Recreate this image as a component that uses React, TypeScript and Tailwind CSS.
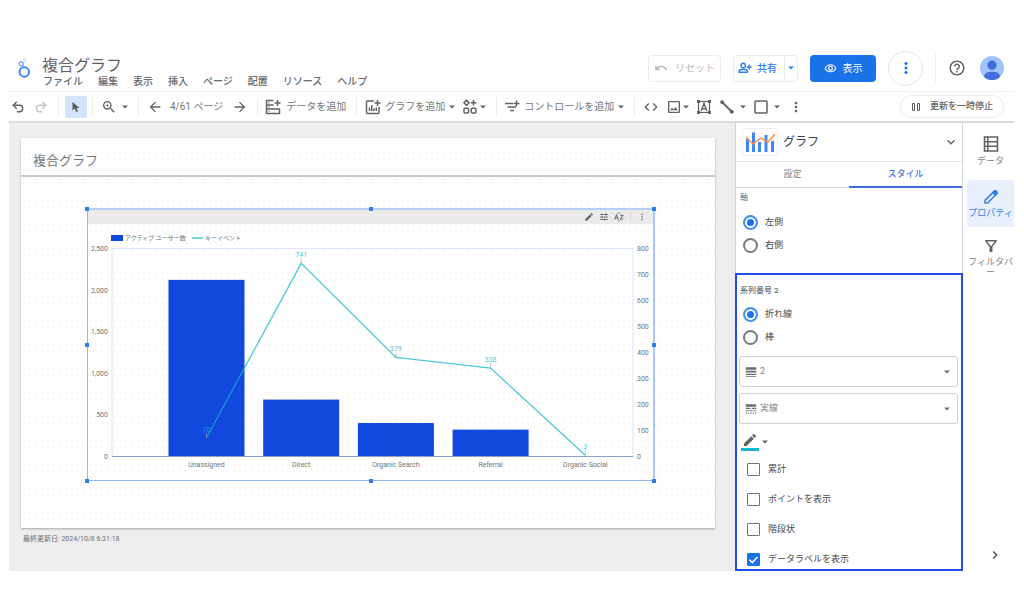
import type { ReactNode } from "react";
import { Redo2, Undo2 } from "lucide-react";
import {
	MdArrowBack,
	MdArrowForward,
	MdChevronRight,
	MdCode,
	MdEdit,
	MdExpandMore,
	MdHelpOutline,
	MdLineStyle,
	MdLineWeight,
	MdMoreVert,
	MdOutlineFilterAlt,
	MdOutlineImage,
	MdOutlineVisibility,
	MdTune,
	MdUndo,
	MdZoomIn,
} from "react-icons/md";

const menus = ["ファイル", "編集", "表示", "挿入", "ページ", "配置", "リソース", "ヘルプ"];

const series = [
	{ label: "Unassigned", users: 2117, events: 70 },
	{ label: "Direct", users: 678, events: 741 },
	{ label: "Organic Search", users: 396, events: 379 },
	{ label: "Referral", users: 317, events: 338 },
	{ label: "Organic Social", users: 0, events: 3 },
];

const Caret = () => (
	<svg viewBox="0 0 6 4" className="w-[6px] h-[4px] shrink-0" fill="currentColor">
		<path d="M0 .5h6L3 3.5z" />
	</svg>
);

const Separator = ({ className = "" }: { className?: string }) => (
	<div className={`w-px h-[18px] bg-[#ececee] shrink-0 ${className}`} />
);

const Logo = () => (
	<svg viewBox="0 0 14 20" className="w-[14px] h-[20px] shrink-0" fill="none">
		<circle cx="7.3" cy="14" r="4.7" stroke="#4285f4" strokeWidth="2" />
		<circle cx="4.2" cy="6" r="2" stroke="#6ea6f7" strokeWidth="1.3" />
		<circle cx="7.5" cy="2.4" r="1.3" stroke="#b9d3fb" strokeWidth="1" />
	</svg>
);

const AddDataIcon = () => (
	<svg viewBox="0 0 16 16" className="size-4 shrink-0" fill="none" stroke="currentColor" strokeWidth="1.5">
		<path d="M8.5 1.5h-7v13h13v-5M1.5 6h7M1.5 10h13M12.5 1v6M9.5 4h6" />
		<path d="M3.5 3.8h1M3.5 8h1M3.5 12.3h1" />
	</svg>
);

const AddChartIcon = () => (
	<svg viewBox="0 0 16 16" className="size-4 shrink-0" fill="none" stroke="currentColor" strokeWidth="1.5">
		<path d="M9 2H2.5a1 1 0 0 0-1 1v10.5a1 1 0 0 0 1 1H13a1 1 0 0 0 1-1V8M12.5 1v6M9.5 4h6" />
		<path d="M4.5 12V8.5M6.8 12V6M9 12V9.5M11.3 12V8.5" />
	</svg>
);

const WidgetsIcon = () => (
	<svg viewBox="0 0 16 16" className="size-4 shrink-0" fill="none" stroke="currentColor" strokeWidth="1.5">
		<path d="M4.5 1.2 7 3.8 4.5 6.4 2 3.8zM11.5 1v5.6M8.7 3.8h5.6" />
		<rect x="2" y="9.3" width="4.6" height="4.6" rx="1" />
		<rect x="9.3" y="9.3" width="4.6" height="4.6" rx="1" />
	</svg>
);

const AddControlIcon = () => (
	<svg viewBox="0 0 16 16" className="size-4 shrink-0" fill="none" stroke="currentColor" strokeWidth="1.5">
		<path d="M1 4.5h8M3.5 8H12M6 11.5h4M12.5 1.5v6M9.5 4.5h6" />
	</svg>
);

const TextBoxIcon = () => (
	<svg viewBox="0 0 16 16" className="size-4 shrink-0" fill="none" stroke="currentColor" strokeWidth="1.2">
		<rect x="2.5" y="2.5" width="11" height="11" />
		<path d="M5 12 8 4.5l3 7.5M6 9.8h4" strokeWidth="1.4" />
		<path d="M1 1h3v3H1zM12 1h3v3h-3zM1 12h3v3H1zM12 12h3v3h-3z" fill="currentColor" stroke="none" />
	</svg>
);

const LineIcon = () => (
	<svg viewBox="0 0 16 16" className="size-4 shrink-0" stroke="currentColor" fill="currentColor">
		<path d="m3 3 10 10" strokeWidth="1.8" />
		<circle cx="3.2" cy="3.2" r="1.5" />
		<circle cx="12.8" cy="12.8" r="1.5" />
	</svg>
);

const RectIcon = () => (
	<svg viewBox="0 0 16 16" className="size-4 shrink-0" fill="none" stroke="currentColor" strokeWidth="1.5">
		<rect x="2" y="2" width="12" height="12" rx=".8" />
	</svg>
);

const ShareIcon = () => (
	<svg viewBox="0 0 14 14" className="size-[14px] shrink-0" fill="none" stroke="currentColor" strokeWidth="1.4">
		<circle cx="5.2" cy="4.5" r="2.2" />
		<path d="M1 11.3v-.8c0-1.4 2.2-2.2 4.2-2.2s4.2.8 4.2 2.2v.8zM11.2 3.5v5M8.7 6h5" />
	</svg>
);

const Avatar = () => (
	<svg viewBox="0 0 24 24" className="size-6 shrink-0">
		<clipPath id="avatar">
			<circle cx="12" cy="12" r="12" />
		</clipPath>
		<g clipPath="url(#avatar)">
			<rect width="24" height="24" fill="#a1c2fa" />
			<circle cx="12" cy="9.2" r="4.6" fill="#3f6fdd" />
			<path d="M4 21c0-4 4-5.3 8-5.3s8 1.3 8 5.3v3H4z" fill="#3f6fdd" />
		</g>
	</svg>
);

const ComboIcon = () => (
	<svg viewBox="0 0 32 24" className="w-[32px] h-[24px]" fill="none">
		<path d="M3.5 9v13M9.5 2.5V22M15.5 12v10M22 5v17M28.5 11v11" stroke="#4285f4" strokeWidth="3" />
		<path d="m2 7 7 7 8-6 7 4 7-8" stroke="#fa903e" strokeWidth="1.4" />
	</svg>
);

const DataIcon = () => (
	<svg viewBox="0 0 16 16" className="size-4 text-[#5f6368]" fill="none" stroke="currentColor" strokeWidth="1.6">
		<path d="M1.5 1h13v14h-13zM1.5 5.7h13M1.5 10.3h13M4.8 1v14" />
	</svg>
);

const PropertyIcon = () => (
	<svg viewBox="0 0 16 16" className="size-4" fill="none" stroke="currentColor" strokeWidth="1.5" strokeLinejoin="round">
		<path d="M2 14v-2.6l8.5-8.5 2.6 2.6L4.6 14z" />
		<path d="M9.8 3.6 11.4 2a1.3 1.3 0 0 1 1.8 0l.8.8a1.3 1.3 0 0 1 0 1.8l-1.6 1.6z" fill="currentColor" />
	</svg>
);

const SortIcon = () => (
	<svg viewBox="0 0 12 12" className="size-[10px]" fill="none" stroke="currentColor" strokeWidth="1.2">
		<path d="m1 9 2-6 2 6M1.5 7h3M7.5 4H11L7.5 8.5H11M4.8 2 6 .8 7.2 2M4.8 10 6 11.2 7.2 10" />
	</svg>
);

const Header = () => (
	<header className="flex items-center h-[47px] border-b border-[#f1f1f1] text-[#5f6368]">
		<div className="ml-2 flex">
			<Logo />
		</div>
		<div className="self-end ml-[11px] pb-[3px]">
			<h1 className="text-[16px] leading-[20px] text-[#5f6267]">複合グラフ</h1>
			<nav className="flex gap-[15px] pl-px text-[10px] leading-[12px] font-medium text-[#66696e]">
				{menus.map((menu) => (
					<button key={menu} type="button">
						{menu}
					</button>
				))}
			</nav>
		</div>
		<div className="ml-auto mr-[10px] flex items-center gap-3 text-[10px]">
			<button
				type="button"
				disabled
				className="flex items-center justify-center gap-[7px] w-[73px] h-[27px] rounded-sm border border-[#ececec] text-[#b9bbbe]"
			>
				<MdUndo className="size-[14px]" />
				リセット
			</button>
			<div className="flex h-[27px] rounded-sm border border-[#e9ebee] text-[#2f80ea] font-medium">
				<button type="button" className="flex items-center gap-[5px] pl-1 pr-[7px] border-r border-[#e9ebee]">
					<ShareIcon />
					共有
				</button>
				<button type="button" aria-label="共有オプション" className="px-[3px]">
					<Caret />
				</button>
			</div>
			<button
				type="button"
				className="flex items-center justify-center gap-[6px] w-[66px] h-[27px] rounded-sm bg-[#1a73e8] text-white"
			>
				<MdOutlineVisibility className="size-[13px]" />
				表示
			</button>
			<button
				type="button"
				aria-label="その他"
				className="flex items-center justify-center size-[35px] rounded-full border border-[#e4e6e8] text-[#1a73e8]"
			>
				<MdMoreVert className="size-[18px]" />
			</button>
			<div className="w-px h-8 bg-[#f0f0f0]" />
			<button type="button" aria-label="ヘルプ" className="mr-[2px]">
				<MdHelpOutline className="size-[18px]" />
			</button>
			<button type="button" aria-label="アカウント">
				<Avatar />
			</button>
		</div>
	</header>
);

const Toolbar = () => (
	<div className="flex items-center h-[31px] border-b-2 border-[#dadbdb] text-[10px] whitespace-nowrap text-[#5f6368]">
		<button type="button" aria-label="元に戻す" className="ml-[2px]">
			<Undo2 className="size-[14px]" strokeWidth={2.5} />
		</button>
		<button type="button" aria-label="やり直す" className="ml-[9px] text-[#c4c6c9]">
			<Redo2 className="size-[14px]" strokeWidth={2.5} />
		</button>
		<Separator className="ml-[10px]" />
		<button
			type="button"
			aria-label="選択"
			className="flex items-center justify-center ml-[6px] w-[22px] h-[22px] bg-[#d2e3fc]"
		>
			<svg viewBox="0 0 10 12" className="w-[10px] h-[12px]" fill="#55585c">
				<path d="M1.5 1v8.5l2.2-1.9 1.5 3.4 1.7-.8-1.5-3.3h3z" />
			</svg>
		</button>
		<Separator className="ml-[5px]" />
		<button type="button" aria-label="ズーム" className="flex items-center gap-[5px] ml-[8px]">
			<MdZoomIn className="size-4" />
			<Caret />
		</button>
		<Separator className="ml-[10px]" />
		<button type="button" aria-label="前のページ" className="ml-[8px]">
			<MdArrowBack className="size-4" />
		</button>
		<span className="ml-[7px] text-[#74777b]">4/61 ページ</span>
		<button type="button" aria-label="次のページ" className="ml-[9px]">
			<MdArrowForward className="size-4" />
		</button>
		<Separator className="ml-[9px]" />
		<button type="button" className="flex items-center gap-[5px] ml-[7px]">
			<AddDataIcon />
			<span className="text-[#74777b]">データを追加</span>
		</button>
		<Separator className="ml-[10px]" />
		<button type="button" className="flex items-center gap-1 ml-[8px]">
			<AddChartIcon />
			<span className="text-[#74777b]">グラフを追加</span>
			<Caret />
		</button>
		<button type="button" aria-label="コミュニティ" className="flex items-center gap-[2px] ml-[7px]">
			<WidgetsIcon />
			<Caret />
		</button>
		<Separator className="ml-[10px]" />
		<button type="button" className="flex items-center gap-1 ml-[7px]">
			<AddControlIcon />
			<span className="text-[#74777b]">コントロールを追加</span>
			<Caret />
		</button>
		<Separator className="ml-[10px]" />
		<button type="button" aria-label="URL 埋め込み" className="ml-[8px]">
			<MdCode className="size-4" />
		</button>
		<button type="button" aria-label="画像" className="flex items-center gap-[1px] ml-[7px]">
			<MdOutlineImage className="size-4" />
			<Caret />
		</button>
		<button type="button" aria-label="テキスト" className="ml-[7px]">
			<TextBoxIcon />
		</button>
		<button type="button" aria-label="線" className="flex items-center gap-[5px] ml-[7px]">
			<LineIcon />
			<Caret />
		</button>
		<button type="button" aria-label="図形" className="flex items-center gap-[5px] ml-[7px]">
			<RectIcon />
			<Caret />
		</button>
		<button type="button" aria-label="その他のツール" className="ml-[8px]">
			<MdMoreVert className="size-4" />
		</button>
		<button
			type="button"
			className="flex items-center gap-[9px] ml-auto mr-[10px] h-[23px] px-[10px] rounded-full border border-[#ececee] text-[9px] font-medium"
		>
			<svg viewBox="0 0 10 10" className="size-[10px]" fill="none" stroke="currentColor">
				<path d="M1.5 1.5h2v7h-2zM6.5 1.5h2v7h-2z" />
			</svg>
			更新を一時停止
		</button>
	</div>
);

const ComboChart = () => {
	const left = 24;
	const right = 545;
	const top = 24;
	const bottom = 232;
	const height = bottom - top;
	const centerX = (i: number) => 118.5 + i * 94.7;
	const usersY = (v: number) => bottom - (v / 2500) * height;
	const eventsY = (v: number) => bottom - (v / 800) * height;

	return (
		<svg viewBox="0 0 565 256" className="block w-full" fontSize="7" fill="#70757a">
			<rect x="23" y="11" width="12" height="6" fill="#1149de" />
			<text x="37" y="16" fontSize="6">
				アクティブ ユーザー数
			</text>
			<path d="M104 14h11" stroke="#4dc9d8" strokeWidth="1.5" />
			<text x="117" y="16" fontSize="6">
				キーイベント
			</text>

			<path
				d={`M${left} ${bottom}V${top}.5H${right}V${bottom}`}
				fill="none"
				stroke="#d9e5fb"
			/>
			{[0, 500, 1000, 1500, 2000, 2500].map((tick) => (
				<text key={tick} x={left - 4} y={usersY(tick) + 3} textAnchor="end">
					{tick.toLocaleString("en-US")}
				</text>
			))}
			{[0, 100, 200, 300, 400, 500, 600, 700, 800].map((tick) => (
				<text key={tick} x={right + 4} y={eventsY(tick) + 3}>
					{tick}
				</text>
			))}

			{series.map(({ label, users }, i) => (
				<g key={label}>
					<rect
						x={centerX(i) - 38}
						y={usersY(users)}
						width="76"
						height={bottom - usersY(users)}
						fill="#1149de"
					/>
					<text x={centerX(i)} y={bottom + 11} textAnchor="middle">
						{label}
					</text>
				</g>
			))}
			<path d={`M${left} ${bottom}.5H${right}`} stroke="#8c9fd0" />

			<polyline
				points={series.map(({ events }, i) => `${centerX(i)},${eventsY(events)}`).join(" ")}
				fill="none"
				stroke="#12b5cb"
				strokeOpacity=".75"
				strokeWidth="1.3"
			/>
			{series.map(({ label, events }, i) => (
				<g key={label}>
					<path d={`M${centerX(i)} ${eventsY(events)}v-5`} stroke="#999" strokeWidth=".6" />
					<text
						x={centerX(i)}
						y={eventsY(events) - 6}
						textAnchor="middle"
						fill="#12b5cb"
						fillOpacity=".8"
					>
						{events}
					</text>
				</g>
			))}
		</svg>
	);
};

const handles = [
	"-left-[2px] -top-[1px]",
	"left-1/2 -translate-x-1/2 -top-[1px]",
	"-right-[1px] -top-[1px]",
	"-left-[2px] top-1/2 -translate-y-1/2",
	"-right-[1px] top-1/2 -translate-y-1/2",
	"-left-[2px] -bottom-[2px]",
	"left-1/2 -translate-x-1/2 -bottom-[2px]",
	"-right-[1px] -bottom-[2px]",
];

const Canvas = () => (
	<main className="flex-1 min-w-0 bg-[#ededed] pl-3 pr-5 pt-[15px]">
		<section className="pb-[47px] bg-white bg-[radial-gradient(circle,#f8f8f9_1px,transparent_1px)] bg-[size:6px_6px] shadow-[0_1px_2px_rgba(0,0,0,0.3)]">
			<h2 className="h-[39px] pl-[12px] pt-[14px] border-b-2 border-[#c9c9c9] text-[13px] leading-[18px] text-[#757780]">
				複合グラフ
			</h2>
			<div className="relative mt-[31px] ml-[66px] mr-[60px]">
				<div className="border border-t-2 border-r-2 border-[#8fb6f6] border-t-[#b7cdf4] border-r-[#a9c6f7]">
					<div className="flex items-center justify-end gap-[5px] h-[14px] pr-[6px] bg-black/8 text-[#5f6368]">
						<button type="button" aria-label="編集">
							<MdEdit className="size-[10px]" />
						</button>
						<button type="button" aria-label="調整">
							<MdTune className="size-[10px]" />
						</button>
						<button type="button" aria-label="並べ替え">
							<SortIcon />
						</button>
						<div className="w-px h-[10px] mx-[1px] bg-[#d8d8d8]" />
						<button type="button" aria-label="グラフのメニュー">
							<MdMoreVert className="size-[10px]" />
						</button>
					</div>
					<ComboChart />
				</div>
				{handles.map((place) => (
					<span key={place} className={`absolute size-[4px] bg-[#2f7de9] ${place}`} />
				))}
			</div>
		</section>
		<p className="mt-[5px] pl-[2px] text-[7px] leading-[12px] text-[#6d7074]">
			最終更新日: 2024/10/8 6:31:18
		</p>
	</main>
);

type RadioProps = { name: string; label: string; checked?: boolean };

const Radio = ({ name, label, checked }: RadioProps) => (
	<label className="flex items-center gap-[7px] h-[23px] text-[9px] text-[#45484c]">
		<input
			type="radio"
			name={name}
			defaultChecked={checked}
			className="appearance-none size-[15px] rounded-full border-2 border-[#777b80] checked:border-[#4a90f0] checked:bg-[#1a73e8] checked:shadow-[inset_0_0_0_2px_white]"
		/>
		{label}
	</label>
);

const Checkbox = ({ label, checked }: { label: string; checked?: boolean }) => (
	<label className="flex items-center gap-[8px] h-[15px] text-[9px] text-[#45484c]">
		<span className="grid place-items-center">
			<input
				type="checkbox"
				defaultChecked={checked}
				className="peer appearance-none col-start-1 row-start-1 size-[13px] rounded-[1px] border border-[#6f7276] checked:border-[#1a73e8] checked:bg-[#1a73e8]"
			/>
			<svg
				viewBox="0 0 13 13"
				className="hidden peer-checked:block col-start-1 row-start-1 size-[13px] pointer-events-none"
				fill="none"
				stroke="white"
				strokeWidth="1.6"
			>
				<path d="m2.5 6.8 2.8 2.8L10.5 4" />
			</svg>
		</span>
		{label}
	</label>
);

type SelectBoxProps = { icon: ReactNode; label: string; options: string[] };

const SelectBox = ({ icon, label, options }: SelectBoxProps) => (
	<div className="grid items-center h-[31px] rounded-[3px] border border-[#cfd1d4] text-[#6b6e73]">
		<span className="col-start-1 row-start-1 pl-[4px] pointer-events-none">{icon}</span>
		<select
			aria-label={label}
			className="appearance-none col-start-1 row-start-1 w-full h-full pl-[20px] text-[9px] text-[#808388] bg-transparent"
		>
			{options.map((option) => (
				<option key={option}>{option}</option>
			))}
		</select>
		<span className="col-start-1 row-start-1 justify-self-end pr-[7px] pointer-events-none">
			<Caret />
		</span>
	</div>
);

const StylePanel = () => (
	<aside className="w-[228px] shrink-0 bg-white border-x border-[#d5d7d9]">
		<div className="flex items-center h-[39px] pl-[6px] pr-[3px] border-b border-[#e3e4e6]">
			<div className="flex items-center justify-center w-[36px] h-[28px] rounded-sm border border-[#efefef]">
				<ComboIcon />
			</div>
			<h2 className="ml-[5px] text-[12px] text-[#3c4043]">グラフ</h2>
			<button type="button" aria-label="閉じる" className="ml-auto text-[#5f6368]">
				<MdExpandMore className="size-4" />
			</button>
		</div>
		<div className="grid grid-cols-2 h-[26px] text-[9px]">
			<button type="button" className="border-b border-[#d5d7d9] text-[#80868b]">
				設定
			</button>
			<button type="button" className="border-b-2 border-[#3f6fdd] pt-px text-[#4a78dc] font-medium">
				スタイル
			</button>
		</div>
		<fieldset className="pt-1 pb-[16px]">
			<legend className="float-left w-full px-1 text-[8px] leading-[12px] text-[#6b6e73]">軸</legend>
			<div className="pl-[7px] pt-[19px]">
				<Radio name="axis" label="左側" checked />
				<Radio name="axis" label="右側" />
			</div>
		</fieldset>
		<div className="-mx-px border-2 border-[#2349f5] pt-[10px] pb-[2px]">
			<h3 className="pl-[3px] text-[8px] leading-[12px] font-medium text-[#66696e]">系列番号 2</h3>
			<div className="mt-[6px] pl-[6px]">
				<Radio name="series" label="折れ線" checked />
				<Radio name="series" label="棒" />
			</div>
			<div className="flex flex-col gap-[6px] mt-[7px] pl-[2px] pr-[3px]">
				<SelectBox icon={<MdLineWeight className="size-[14px]" />} label="線の太さ" options={["2", "1", "3"]} />
				<SelectBox icon={<MdLineStyle className="size-[14px]" />} label="線のスタイル" options={["実線", "破線", "点線"]} />
			</div>
			<button
				type="button"
				aria-label="線の色"
				className="flex items-center gap-[3px] mt-[8px] ml-[4px] h-[19px] text-[#5f6267]"
			>
				<span className="border-b-[3px] border-[#12b5cb] px-px">
					<MdEdit className="size-4" />
				</span>
				<Caret />
			</button>
			<div className="flex flex-col gap-[15px] mt-[11px] pl-[10px]">
				<Checkbox label="累計" />
				<Checkbox label="ポイントを表示" />
				<Checkbox label="階段状" />
				<Checkbox label="データラベルを表示" checked />
			</div>
		</div>
	</aside>
);

const SideRail = () => (
	<nav className="flex flex-col w-[51px] shrink-0 pl-1 pt-[13px] pb-2 text-[9px] leading-[10px] text-[#808388]">
		<button type="button" className="flex flex-col items-center gap-[4px] h-[44px]">
			<DataIcon />
			データ
		</button>
		<button
			type="button"
			className="flex flex-col items-center justify-center gap-[3px] h-[47px] rounded-l-sm bg-[#e8f0fe] text-[#2f80ea]"
		>
			<PropertyIcon />
			プロパティ
		</button>
		<button type="button" className="flex flex-col items-center gap-[2px] mt-[10px] text-center">
			<MdOutlineFilterAlt className="size-[18px] text-[#5f6368]" />
			フィルタバー
		</button>
		<button type="button" aria-label="パネルを展開" className="mt-auto ml-[20px] text-[#4a4d51]">
			<MdChevronRight className="size-4" />
		</button>
	</nav>
);

export default function App() {
	return (
		<div className="pt-[45px] pb-10 pl-[9px] pr-[10px] bg-white font-[Roboto,'Noto_Sans_CJK_JP',sans-serif]">
			<Header />
			<Toolbar />
			<div className="flex">
				<Canvas />
				<StylePanel />
				<SideRail />
			</div>
		</div>
	);
}
